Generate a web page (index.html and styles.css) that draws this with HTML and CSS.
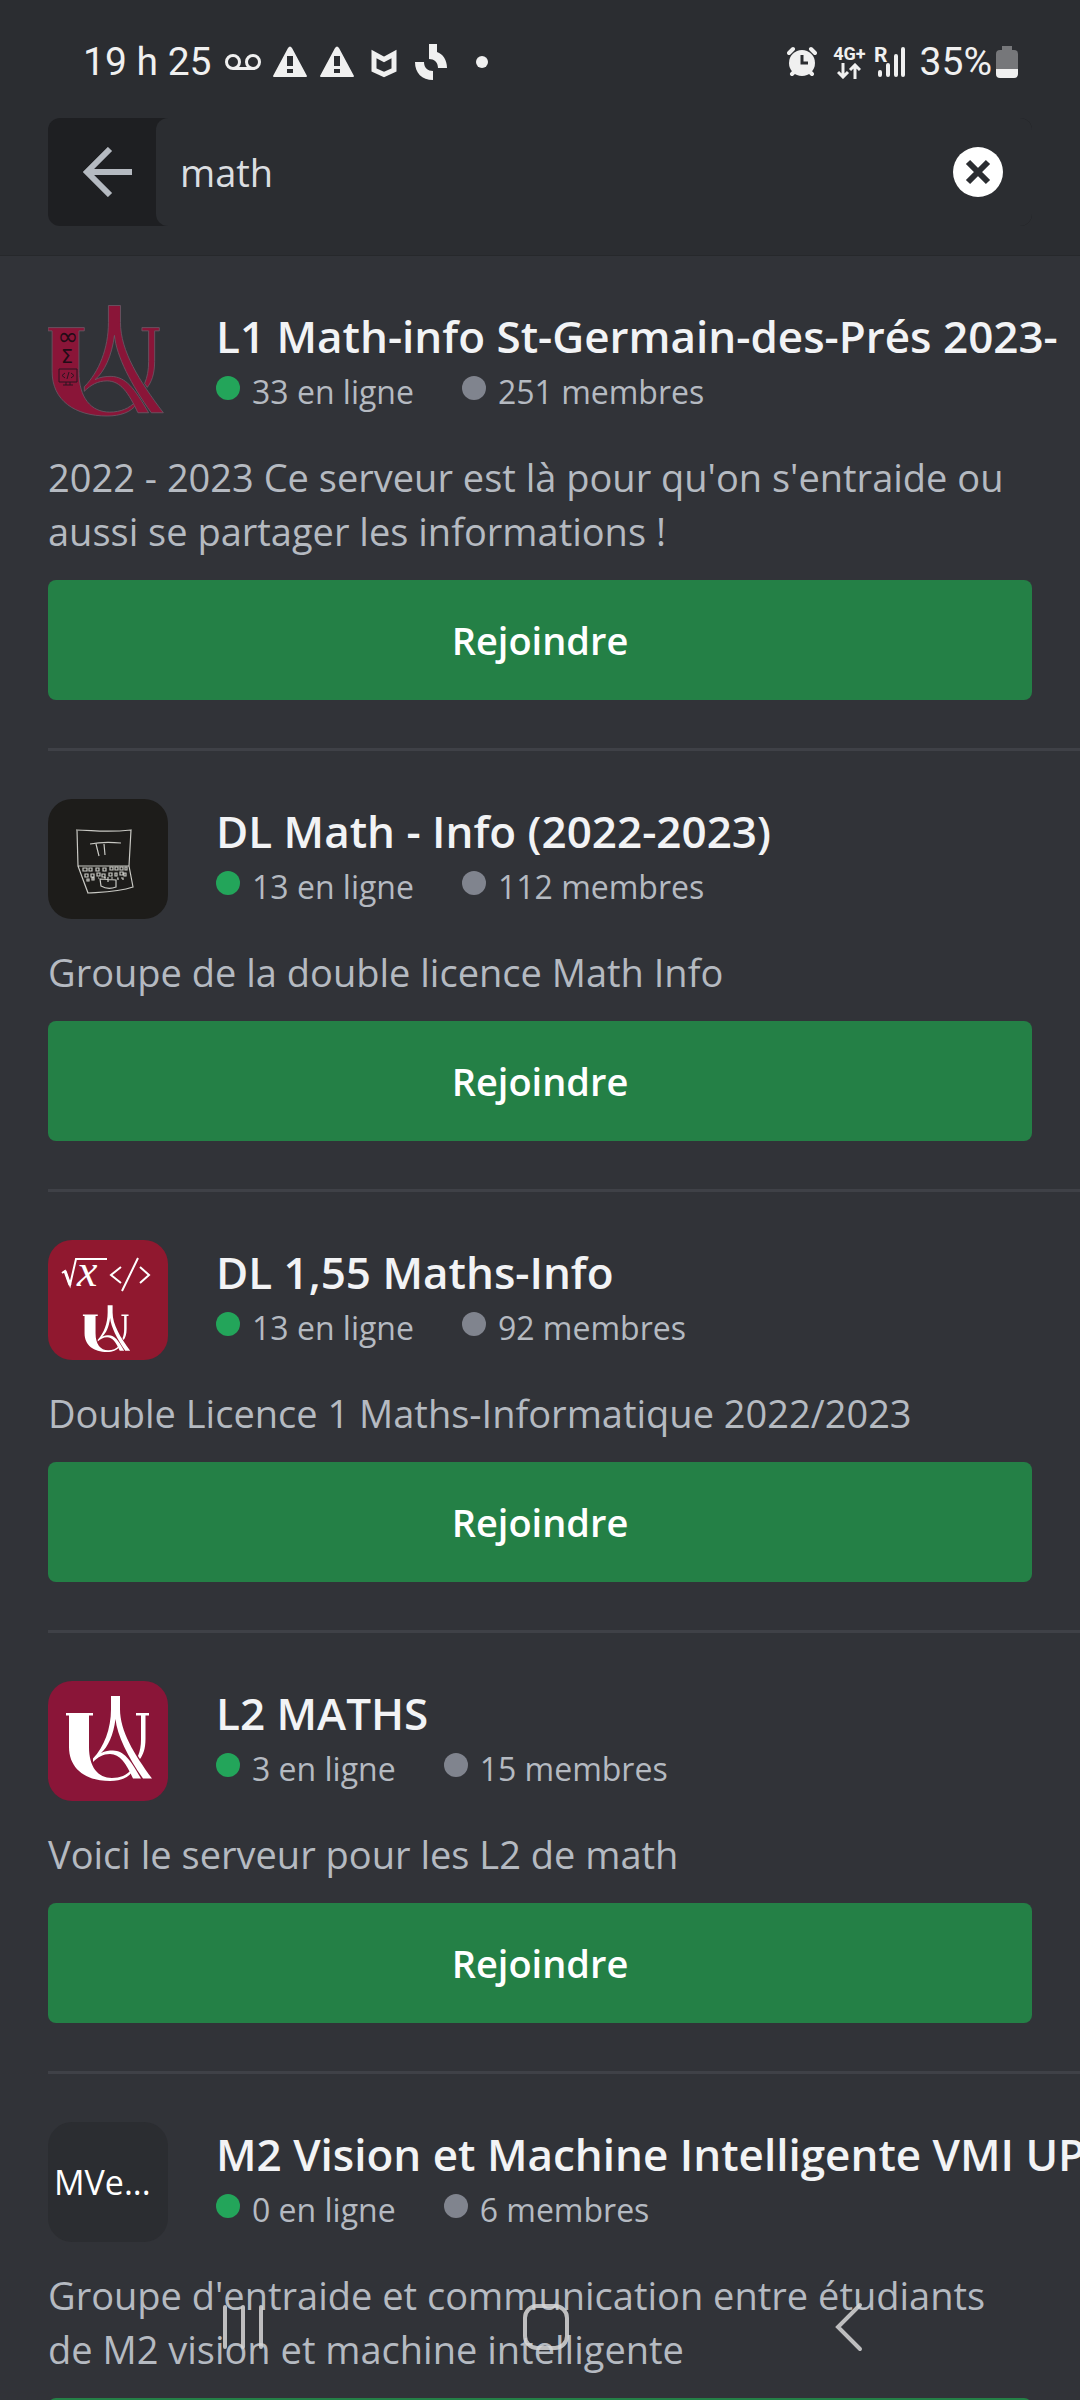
FILE: index.html
```html
<!DOCTYPE html>
<html lang="fr">
<head>
    <meta charset="UTF-8">
    <meta name="viewport" content="width=device-width, initial-scale=1.0">
    <title>Recherche de serveurs</title>
    <link rel="stylesheet" href="styles.css">
</head>
<body>
    <!-- Shared logo shape -->
    <svg class="defs" width="0" height="0" aria-hidden="true">
        <defs>
            <g id="ua-logo">
                <path d="M18 32H45V34.500H41V66C41 86 50 97 64 97C72 97 79 94 83 89L84 91C80 97 72 100 62 100C38 100 21 88 21 66V34.500H18Z"/>
                <path d="M63 15H72V28C72 50 86 73 104 97.500H95C80 76 69 54 67.500 38C65.500 54 60 66 53 72C57 70 61 69.500 65 69.500C76 70 82 78 93 97.500H85C78 82 72 73 62 73C55 73 50 76 45 81V77.500C56 66 63 48 63 28Z"/>
                <path d="M88 32H101V34.500H97.500V58C97.500 68 95 74 92 78L90 75C92 70 93 65 93 58V34.500H88Z"/>
            </g>
        </defs>
    </svg>

    <div class="app">
        <header class="top">
            <div class="status-bar">
                <div class="status-left">
                    <span class="status-text">19 h 25</span>
                    <svg width="36" height="36" viewBox="0 0 36 36" fill="none" stroke="#f0f0f0" stroke-width="3"><circle cx="8" cy="18" r="6.500"/><circle cx="28" cy="18" r="6.500"/><path d="M8 24.500H28"/></svg>
                    <svg width="36" height="36" viewBox="0 0 36 36"><path fill="#f0f0f0" d="M18 3L35 32Q35 33 34 33H2Q1 33 1 32L16 4Q18 1 20 4L35 32Z"/><path fill="#2b2d31" d="M15 12H21V22H15ZM15 25H21V29H15Z"/></svg>
                    <svg width="36" height="36" viewBox="0 0 36 36"><path fill="#f0f0f0" d="M18 3L35 32Q35 33 34 33H2Q1 33 1 32L16 4Q18 1 20 4L35 32Z"/><path fill="#2b2d31" d="M15 12H21V22H15ZM15 25H21V29H15Z"/></svg>
                    <svg width="36" height="36" viewBox="0 0 36 36" fill="none" stroke="#f0f0f0" stroke-width="5"><path d="M8 10V26L18 30.500L28 26V10L18 15.500Z"/></svg>
                    <svg width="36" height="36" viewBox="0 0 36 36" fill="#f0f0f0"><path d="M16 0H24V8C30 10 34 16 34 24H25C25 18 21 15 16 15Z"/><path d="M2 18H11C11 24 15 27 20 27V36C9 36 2 29 2 18Z"/></svg>
                    <span class="status-dot"></span>
                </div>
                <div class="status-right">
                    <svg width="30" height="32" viewBox="0 0 30 32"><g stroke="#f0f0f0" stroke-width="4" stroke-linecap="round"><path d="M2 7L6 3M28 7L24 3M5 28L8 25M25 28L22 25"/></g><circle cx="15" cy="17" r="13" fill="#f0f0f0"/><path d="M15 9V17H21" fill="none" stroke="#2b2d31" stroke-width="3"/></svg>
                    <div class="network">
                        <span class="network-label">4G+</span>
                        <svg width="24" height="16" viewBox="0 0 24 16" fill="none" stroke="#f0f0f0" stroke-width="3"><path d="M6 0V14M1 9L6 14L11 9M18 16V2M13 7L18 2L23 7"/></svg>
                    </div>
                    <svg class="signal" width="32" height="32" viewBox="0 0 32 32"><text x="0" y="16">R</text><g stroke="#f0f0f0" stroke-width="4" stroke-linecap="round"><path d="M6 26V29M14 19V29M22 10V29M29 3V29"/></g></svg>
                    <span class="status-text">35%</span>
                    <svg class="battery" width="22" height="32" viewBox="0 0 22 32"><path fill="#76777a" d="M6 0H16V4H18Q22 4 22 8V23H0V8Q0 4 4 4H6Z"/><path fill="#f0f0f0" d="M0 23H22V28Q22 32 18 32H4Q0 32 0 28Z"/></svg>
                </div>
            </div>
            <div class="search">
                <button class="back" type="button" aria-label="Retour">
                    <svg width="50" height="50" viewBox="0 0 50 50" fill="none" stroke="#b5bac1" stroke-width="6"><path d="M27 2L4 25L27 48M4 25H49"/></svg>
                </button>
                <input class="search-input" type="text" value="math" aria-label="Rechercher">
                <button class="clear" type="button" aria-label="Effacer">
                    <svg width="50" height="50" viewBox="0 0 50 50"><circle cx="25" cy="25" r="25" fill="#fff"/><path d="M15 15L35 35M35 15L15 35" stroke="#2b2d31" stroke-width="6"/></svg>
                </button>
            </div>
        </header>

        <main class="server-list">
            <article class="server">
                <div class="server-head">
                    <svg class="server-icon" viewBox="0 0 120 120" aria-hidden="true">
                        <g transform="translate(-24 -18) scale(1.340 1.300)" fill="#8a1538" stroke="#6b5b68" stroke-width="0.600"><use href="#ua-logo"/></g>
                        <text class="icon-symbol" x="20" y="41" font-size="25">∞</text>
                        <text class="icon-symbol" x="19" y="59" font-size="19">Σ</text>
                        <g fill="none" stroke="#2a1420"><path d="M11 65H29V78H11ZM18 78V81M22 78V81M15 81H25"/><path d="M17 69L14 71.500L17 74M23 69L26 71.500L23 74M21 68L19 75"/></g>
                    </svg>
                    <div class="server-info">
                        <h2 class="server-name">L1 Math-info St-Germain-des-Prés 2023-</h2>
                        <div class="server-meta">
                            <span class="count online">33 en ligne</span>
                            <span class="count">251 membres</span>
                        </div>
                    </div>
                </div>
                <p class="description">2022 - 2023 Ce serveur est là pour qu'on s'entraide ou aussi se partager les informations !</p>
                <button class="join" type="button">Rejoindre</button>
            </article>

            <article class="server">
                <div class="server-head">
                    <svg class="server-icon" viewBox="0 0 120 120" aria-hidden="true">
                        <rect width="120" height="120" fill="#1d1c1a"/>
                        <g fill="none" stroke="#c9c9c4" stroke-width="1.200">
                            <path d="M28 31C45 31 55 34 83 31L81 67M29 31L30 67L81 67L85 88C70 93 55 93 40 94L30 67"/>
                            <path d="M42 45C52 43 62 43 73 44M48 45L51 57M56 45L57 56"/>
                            <path d="M52 80L68 81V88Q60 91 53 87ZM60 78V83"/>
                            <path d="M35 69H39V72H35ZM41 69H44V72H41ZM48 69H51V72H48ZM55 69H58V72H55ZM62 68H65V71H62ZM67 68H70V71H67ZM72 68H75V71H72ZM77 68H79V71H77ZM37 75H40V78H37ZM43 75H46V78H43ZM49 74H52V77H49ZM54 75H57V78H54ZM61 74H64V77H61ZM67 74H69V77H67ZM72 73H75V76H72ZM76 74H78V77H76ZM39 80H41V82H39ZM44 79H46V81H44ZM50 79H51M56 79H58M63 79H65M69 79H70V81M73 79H75V81"/>
                        </g>
                    </svg>
                    <div class="server-info">
                        <h2 class="server-name">DL Math - Info (2022-2023)</h2>
                        <div class="server-meta">
                            <span class="count online">13 en ligne</span>
                            <span class="count">112 membres</span>
                        </div>
                    </div>
                </div>
                <p class="description">Groupe de la double licence Math Info</p>
                <button class="join" type="button">Rejoindre</button>
            </article>

            <article class="server">
                <div class="server-head">
                    <svg class="server-icon" viewBox="0 0 120 120" aria-hidden="true">
                        <rect width="120" height="120" fill="#90182f"/>
                        <g fill="none" stroke="#fff" stroke-width="2">
                            <path d="M14 33L17 31L22 45L28 19H59"/>
                            <path d="M17 31L22 45" stroke-width="3"/>
                            <path d="M73 27L63 35L73 43M90 18L74 51M92 27L101 35L92 43"/>
                        </g>
                        <text class="icon-x" x="29" y="46">x</text>
                        <g transform="translate(25 57) scale(0.550)" fill="#fff"><use href="#ua-logo"/></g>
                    </svg>
                    <div class="server-info">
                        <h2 class="server-name">DL 1,55 Maths-Info</h2>
                        <div class="server-meta">
                            <span class="count online">13 en ligne</span>
                            <span class="count">92 membres</span>
                        </div>
                    </div>
                </div>
                <p class="description">Double Licence 1 Maths-Informatique 2022/2023</p>
                <button class="join" type="button">Rejoindre</button>
            </article>

            <article class="server">
                <div class="server-head">
                    <svg class="server-icon" viewBox="0 0 120 120" aria-hidden="true">
                        <rect width="120" height="120" fill="#8a1538"/>
                        <use href="#ua-logo" fill="#fff"/>
                    </svg>
                    <div class="server-info">
                        <h2 class="server-name">L2 MATHS</h2>
                        <div class="server-meta">
                            <span class="count online">3 en ligne</span>
                            <span class="count">15 membres</span>
                        </div>
                    </div>
                </div>
                <p class="description">Voici le serveur pour les L2 de math</p>
                <button class="join" type="button">Rejoindre</button>
            </article>

            <article class="server">
                <div class="server-head">
                    <div class="server-icon server-initials">MVe...</div>
                    <div class="server-info">
                        <h2 class="server-name">M2 Vision et Machine Intelligente VMI UP</h2>
                        <div class="server-meta">
                            <span class="count online">0 en ligne</span>
                            <span class="count">6 membres</span>
                        </div>
                    </div>
                </div>
                <p class="description">Groupe d'entraide et communication entre étudiants de M2 vision et machine intelligente</p>
                <button class="join" type="button">Rejoindre</button>
            </article>
        </main>

        <nav class="system-nav">
            <button type="button" aria-label="Applications récentes">
                <svg width="50" height="50" viewBox="0 0 50 50" stroke="#d8d8d8" stroke-width="4" stroke-linecap="round"><path d="M7 5V45M25 5V45M43 5V45"/></svg>
            </button>
            <button type="button" aria-label="Accueil">
                <svg width="50" height="50" viewBox="0 0 50 50" fill="none" stroke="#d8d8d8" stroke-width="4"><rect x="4" y="4" width="42" height="42" rx="12"/></svg>
            </button>
            <button type="button" aria-label="Précédent">
                <svg width="50" height="50" viewBox="0 0 50 50" fill="none" stroke="#d8d8d8" stroke-width="4" stroke-linecap="round"><path d="M36 3L14 25L36 47"/></svg>
            </button>
        </nav>
    </div>
</body>
</html>
```
FILE: styles.css
```css
* {
    margin: 0;
    padding: 0;
    box-sizing: border-box;
}

body {
    font-family: 'Open Sans', 'Noto Sans', sans-serif;
    background: #313338;
    color: #b5bac1;
}

button {
    font-family: inherit;
    border: none;
    background: none;
    cursor: pointer;
}

svg {
    display: block;
    flex-shrink: 0;
}

.defs {
    position: absolute;
}

.app {
    height: 100vh;
    display: flex;
    flex-direction: column;
    overflow: hidden;
}

/* Header */
.top {
    background: #2b2d31;
    border-bottom: 1px solid #26282b;
    flex-shrink: 0;
    padding-bottom: 29px;
}

.status-bar {
    height: 118px;
    padding: 6px 62px 0 83px;
    display: flex;
    align-items: center;
    justify-content: space-between;
    color: #f0f0f0;
    font-family: Roboto, sans-serif;
}

.status-left,
.status-right {
    display: flex;
    align-items: center;
}

.status-left {
    gap: 11px;
}

.status-right {
    gap: 8px;
}

.status-text {
    font-size: 39px;
    line-height: 48px;
}

.status-left .status-text {
    margin-right: 2px;
}

.status-dot {
    width: 12px;
    height: 12px;
    margin-left: 16px;
    border-radius: 50%;
    background: #f0f0f0;
}

.network {
    display: flex;
    flex-direction: column;
    align-items: center;
    margin-left: 8px;
}

.network-label {
    font-size: 18px;
    line-height: 18px;
    font-weight: 700;
}

.signal {
    margin-right: 6px;
    overflow: visible;
}

.signal text {
    fill: #f0f0f0;
    font-size: 21px;
    font-weight: 700;
}

.battery {
    margin-left: -4px;
}

.search {
    margin: 0 48px;
    height: 108px;
    display: flex;
    align-items: center;
    border-radius: 12px;
    background: #1e1f22;
    overflow: hidden;
}

.back {
    width: 108px;
    height: 108px;
    padding-left: 12px;
    display: flex;
    align-items: center;
    justify-content: center;
    flex-shrink: 0;
}

.search-input {
    flex: 1;
    min-width: 0;
    height: 108px;
    padding: 0 24px;
    border: none;
    border-radius: 12px 0 0 12px;
    outline: none;
    background: #2b2d31;
    color: #dbdee1;
    font-family: inherit;
    font-size: 38px;
}

.clear {
    height: 108px;
    padding-right: 29px;
    background: #2b2d31;
}

/* Server list */
.server-list {
    flex: 1;
    min-height: 0;
    overflow: hidden;
}

.server {
    margin-left: 48px;
    padding: 48px 48px 48px 0;
    border-bottom: 3px solid #3f4147;
}

.server-head {
    display: flex;
    gap: 48px;
    margin-right: -48px;
    overflow: hidden;
}

.server-icon {
    width: 120px;
    height: 120px;
    flex-shrink: 0;
    border-radius: 24px;
}

.server-initials {
    display: flex;
    align-items: center;
    padding-left: 6px;
    background: #2b2d31;
    color: #fff;
    font-size: 34px;
}

.icon-symbol {
    font-family: 'DejaVu Sans', sans-serif;
    text-anchor: middle;
    fill: #210c16;
}

.icon-x {
    font-family: 'Liberation Serif', serif;
    font-style: italic;
    font-size: 46px;
    fill: #fff;
}

.server-info {
    min-width: 0;
}

.server-name {
    color: #f2f3f5;
    font-size: 44px;
    line-height: 64px;
    font-weight: 600;
    white-space: nowrap;
}

.server-meta {
    display: flex;
    gap: 48px;
}

.count {
    display: flex;
    align-items: center;
    gap: 12px;
    font-size: 32px;
    line-height: 48px;
}

.count::before {
    content: '';
    width: 24px;
    height: 24px;
    margin-bottom: 8px;
    border-radius: 50%;
    background: #80848e;
}

.online::before {
    background: #23a55a;
}

.description {
    margin-top: 26px;
    font-size: 38px;
    line-height: 54px;
}

.join {
    display: block;
    width: 100%;
    height: 120px;
    margin-top: 22px;
    border-radius: 8px;
    background: #248046;
    color: #fff;
    font-size: 38px;
    font-weight: 600;
}

/* System navigation drawn over the list */
.system-nav {
    position: fixed;
    left: 0;
    right: 0;
    bottom: 0;
    height: 146px;
    padding: 0 80px 0 92px;
    display: grid;
    grid-template-columns: repeat(3, 1fr);
    opacity: 0.85;
}

.system-nav button {
    display: flex;
    align-items: center;
    justify-content: center;
}
```
